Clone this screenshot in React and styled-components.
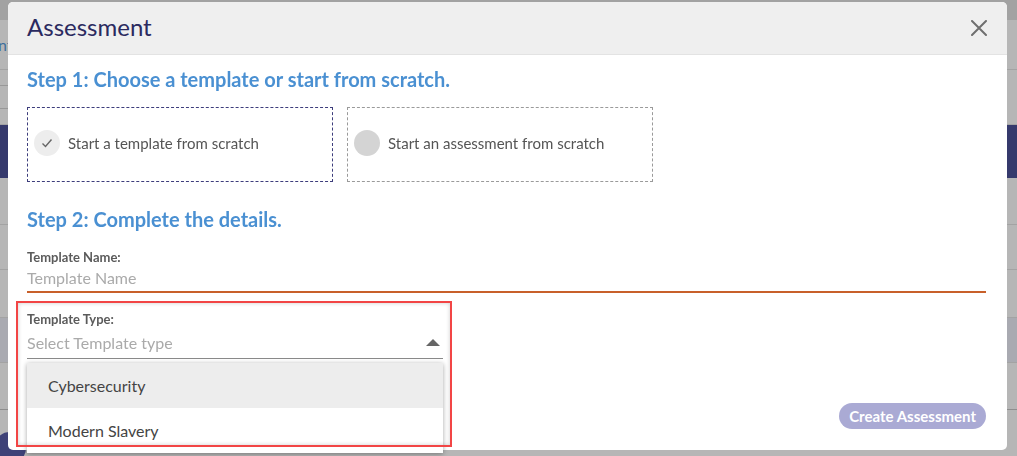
import React from 'react'
import styled, { createGlobalStyle } from 'styled-components'

const GlobalStyle = createGlobalStyle`
  html, body {
    margin: 0;
    padding: 0;
    overflow: hidden;
    font-family: Lato, "Open Sans", sans-serif;
  }
`

const App = () => {
  return (
    <>
      <GlobalStyle />
      <Page>
        <TopBand />
        <PageRow $height={50}>
          <PageLink>Recent</PageLink>
        </PageRow>
        <PageRow $height={55}>
          <SearchBox />
        </PageRow>
        <PageRow $height={53} $bg="#35396c" $line="#35396c" />
        <PageRow $height={47} />
        <PageRow $height={45} />
        <PageRow $height={48} />
        <PageRow $height={45} $bg="#a9aab1" />
        <PageRow $height={47} $line="#8e8e8e" />
        <Avatar />
      </Page>

      <Overlay>
        <Modal>
          <ModalHeader>
            <ModalTitle>Assessment</ModalTitle>
            <CloseButton aria-label="close">
              <svg width="16" height="16" viewBox="0 0 16 16">
                <path d="M1 1 L15 15 M15 1 L1 15" stroke="#6f6f6f" strokeWidth="2" strokeLinecap="round" />
              </svg>
            </CloseButton>
          </ModalHeader>

          <ModalBody>
            <StepHeading>Step 1: Choose a template or start from scratch.</StepHeading>
            <Options>
              <OptionCard $selected>
                <Radio $selected>
                  <svg width="12" height="12" viewBox="0 0 12 12">
                    <path d="M1.5 6.5 L4.5 9.5 L10.5 2.5" fill="none" stroke="#666" strokeWidth="1.4" />
                  </svg>
                </Radio>
                <OptionText>Start a template from scratch</OptionText>
              </OptionCard>
              <OptionCard>
                <Radio />
                <OptionText>Start an assessment from scratch</OptionText>
              </OptionCard>
            </Options>

            <StepHeading $top={25}>Step 2: Complete the details.</StepHeading>

            <Field>
              <Label>Template Name:</Label>
              <TextInput placeholder="Template Name" />
            </Field>

            <TypeField>
              <Label>Template Type:</Label>
              <Select>
                <Placeholder>Select Template type</Placeholder>
                <Caret />
              </Select>
              <Menu>
                <MenuItem $active>Cybersecurity</MenuItem>
                <MenuItem>Modern Slavery</MenuItem>
              </Menu>
              <Highlight />
            </TypeField>

            <Footer>
              <CreateButton disabled>Create Assessment</CreateButton>
            </Footer>
          </ModalBody>
        </Modal>
      </Overlay>
    </>
  )
}

export default App

const Page = styled.div`
  position: relative;
  height: 456px;
  background: #b6b6b6;
  overflow: hidden;
`

const TopBand = styled.div`
  height: 20px;
  background: #a2a2a2;
`

const PageRow = styled.div`
  height: ${(p) => p.$height}px;
  box-sizing: border-box;
  background: ${(p) => p.$bg || 'transparent'};
  border-bottom: 1px solid ${(p) => p.$line || '#a3a3a3'};
  display: flex;
  align-items: center;
`

const PageLink = styled.span`
  color: #3d6f9c;
  font-size: 16px;
  margin-left: -36px;
`

const SearchBox = styled.div`
  width: 40px;
  height: 22px;
  margin-left: -20px;
  border: 1px solid #999;
  border-radius: 4px;
`

const Avatar = styled.div`
  position: absolute;
  left: -6px;
  top: 432px;
  width: 32px;
  height: 32px;
  border-radius: 50%;
  background: #3e4177;
`

const Overlay = styled.div`
  position: fixed;
  inset: 0;
  padding: 2px 0 0 8px;
`

const Modal = styled.div`
  width: 999px;
  height: 448px;
  background: #fff;
  border-radius: 5px;
  display: flex;
  flex-direction: column;
`

const ModalHeader = styled.div`
  height: 53px;
  box-sizing: border-box;
  background: #efefef;
  border-bottom: 1px solid #e3e3e3;
  border-radius: 5px 5px 0 0;
  display: flex;
  align-items: center;
  justify-content: space-between;
  padding: 0 20px 0 19px;
`

const ModalTitle = styled.h2`
  margin: 0;
  font-size: 24px;
  font-weight: 400;
  color: #2b2a5f;
  padding-bottom: 3px;
`

const CloseButton = styled.button`
  border: none;
  background: none;
  padding: 0;
  display: flex;
  cursor: pointer;
`

const ModalBody = styled.div`
  flex: 1;
  display: flex;
  flex-direction: column;
  padding: 12px 21px 21px 19px;
`

const StepHeading = styled.h3`
  margin: ${(p) => p.$top || 0}px 0 0;
  font-size: 20px;
  line-height: 24px;
  font-weight: 700;
  color: #4a90d2;
`

const Options = styled.div`
  display: flex;
  gap: 14px;
  margin-top: 16px;
`

const OptionCard = styled.div`
  width: 306px;
  height: 75px;
  box-sizing: border-box;
  border: 1px dashed ${(p) => (p.$selected ? '#3d3d7c' : '#9a9a9a')};
  display: flex;
  align-items: center;
  gap: 8px;
  padding-left: 6px;
  padding-bottom: 3px;
`

const Radio = styled.div`
  width: 26px;
  height: 26px;
  border-radius: 50%;
  background: ${(p) => (p.$selected ? '#ededed' : '#d4d4d4')};
  display: flex;
  align-items: center;
  justify-content: center;
`

const OptionText = styled.span`
  font-size: 15px;
  color: #555;
`

const Field = styled.div`
  display: flex;
  flex-direction: column;
  margin-top: 18px;
`

const Label = styled.label`
  font-size: 13px;
  font-weight: 700;
  color: #5b5b5b;
  line-height: 16px;
`

const TextInput = styled.input`
  border: none;
  border-bottom: 2px solid #c8602a;
  outline: none;
  padding: 3px 0 4px;
  font-family: inherit;
  font-size: 16px;
  color: #333;
  &::placeholder {
    color: #aaa;
  }
`

const TypeField = styled.div`
  position: relative;
  width: 416px;
  margin-top: 18px;
  display: flex;
  flex-direction: column;
`

const Select = styled.div`
  display: flex;
  align-items: center;
  justify-content: space-between;
  border-bottom: 1px solid #8a8a8a;
  padding: 6px 3px 6px 0;
`

const Placeholder = styled.span`
  font-size: 16px;
  color: #aaa;
`

const Caret = styled.span`
  width: 0;
  height: 0;
  border-left: 7px solid transparent;
  border-right: 7px solid transparent;
  border-bottom: 7px solid #666;
`

const Menu = styled.div`
  position: absolute;
  left: 0;
  right: 0;
  top: calc(100% + 4px);
  background: #fff;
  box-shadow: 0 1px 5px rgba(0, 0, 0, 0.35);
  z-index: 2;
`

const MenuItem = styled.div`
  height: 45px;
  display: flex;
  align-items: center;
  padding-left: 21px;
  font-size: 16px;
  color: #444;
  background: ${(p) => (p.$active ? '#ededed' : '#fff')};
`

const Highlight = styled.div`
  position: absolute;
  left: -11px;
  top: -10px;
  width: 436px;
  height: 146px;
  box-sizing: border-box;
  border: 2px solid #f24545;
  box-shadow: inset 0 0 4px rgba(0, 0, 0, 0.2);
  pointer-events: none;
  z-index: 3;
`

const Footer = styled.div`
  margin-top: auto;
  display: flex;
  justify-content: flex-end;
`

const CreateButton = styled.button`
  height: 26px;
  padding: 0 10px;
  border: none;
  border-radius: 13px;
  background: #aaaad4;
  color: #fff;
  font-family: inherit;
  font-size: 15px;
  font-weight: 700;
`
